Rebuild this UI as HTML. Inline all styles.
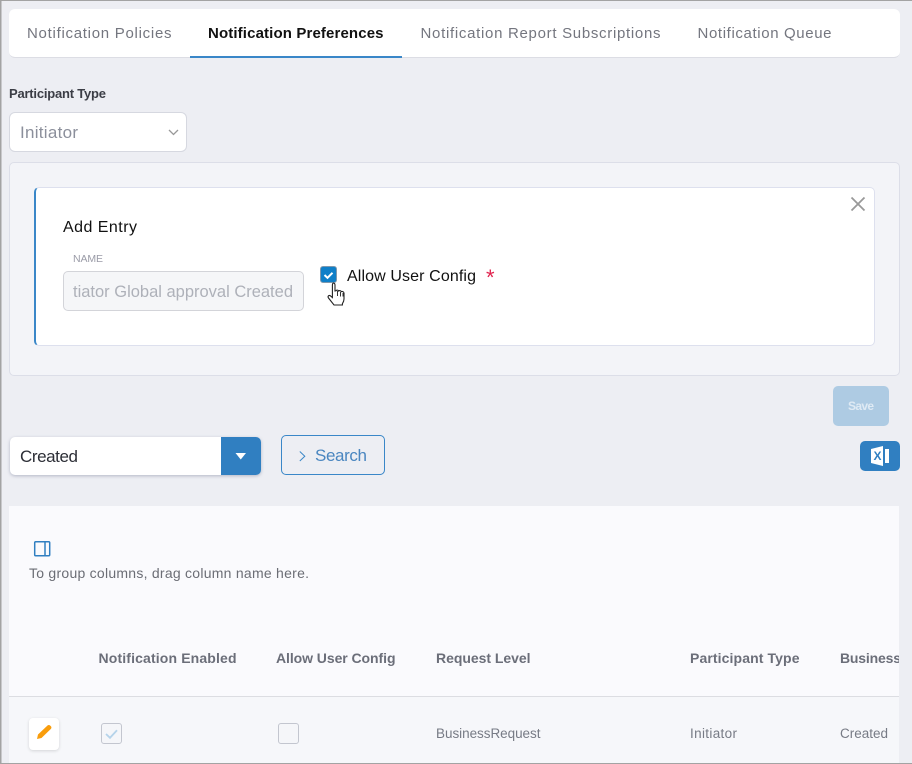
<!DOCTYPE html>
<html><head><meta charset="utf-8"><style>
html,body{margin:0;padding:0}
body{width:912px;height:764px;overflow:hidden;position:relative;background:#edeef3;font-family:"Liberation Sans",sans-serif}
.b{position:absolute;box-sizing:border-box}
svg{position:absolute;left:0;top:0}
text{font-family:"Liberation Sans",sans-serif}
</style></head><body>
<div class="b" style="left:9px;top:9px;width:891px;height:49px;background:#fff;border-radius:6px;border-bottom:1px solid #dcdde4"></div>
<div class="b" style="left:190px;top:56px;width:212px;height:2px;background:#3a87c8"></div>
<div class="b" style="left:9px;top:112px;width:178px;height:40px;background:#fff;border:1px solid #d6d8e0;border-radius:6px"></div>
<div class="b" style="left:9px;top:162px;width:891px;height:214px;background:#f3f4f8;border:1px solid #dcdee8;border-radius:5px"></div>
<div class="b" style="left:34px;top:187px;width:841px;height:159px;background:#fff;border:1px solid #dde0ee;border-left:2px solid #3a87c8;border-radius:5px"></div>
<div class="b" style="left:63px;top:271px;width:241px;height:40px;background:#f5f6f8;border:1px solid #d3d4d9;border-radius:5px"></div>
<div class="b" style="left:320px;top:266px;width:17px;height:17px;background:#0f7fc8;border:1px solid #7f98ad;border-radius:3px"></div>
<div class="b" style="left:833px;top:386px;width:56px;height:40px;background:#aecbe3;border-radius:5px"></div>
<div class="b" style="left:10px;top:437px;width:251px;height:38px;background:#fff;border-radius:5px;box-shadow:0 1px 3px rgba(90,100,130,.4);overflow:hidden"><div class="b" style="left:211px;top:0;width:40px;height:38px;background:#307fc1"></div></div>
<div class="b" style="left:281px;top:435px;width:104px;height:40px;border:1px solid #3a87c8;border-radius:5px"></div>
<div class="b" style="left:860px;top:441px;width:40px;height:30px;background:#307fc1;border-radius:5px"></div>
<div class="b" style="left:9px;top:506px;width:890px;height:258px;background:#fafafd"></div>
<div class="b" style="left:9px;top:696px;width:890px;height:68px;background:#f6f7fa;border-top:1px solid #dcdde2"></div>
<div class="b" style="left:29px;top:718px;width:30px;height:32px;background:#fff;border-radius:4px;box-shadow:0 1px 3px rgba(0,0,0,.14)"></div>
<div class="b" style="left:101px;top:723px;width:21px;height:21px;border:1px solid #c3c6cf;border-radius:3px;background:#f5f6f9"></div>
<div class="b" style="left:278px;top:723px;width:21px;height:21px;border:1px solid #c3c6cf;border-radius:3px;background:#f5f6f9"></div>
<svg width="912" height="764" viewBox="0 0 912 764">
<g font-size="15" fill="#74767f">
<text x="27" y="38" textLength="144.500" lengthAdjust="spacing">Notification Policies</text>
<text x="208" y="38" textLength="175.500" lengthAdjust="spacing" fill="#111" font-weight="700">Notification Preferences</text>
<text x="420.500" y="38" textLength="240" lengthAdjust="spacing">Notification Report Subscriptions</text>
<text x="697.500" y="38" textLength="134" lengthAdjust="spacing">Notification Queue</text>
</g>
<text x="9" y="98" font-size="13" font-weight="700" fill="#3b3d45" textLength="97" lengthAdjust="spacing">Participant Type</text>
<text x="20" y="138" font-size="17" fill="#8b8f9b" textLength="58" lengthAdjust="spacing">Initiator</text>
<path d="M169 130l4.500 4.500 4.500-4.500" fill="none" stroke="#999" stroke-width="1.300"/>
<text x="63" y="232" font-size="16" fill="#111" textLength="74" lengthAdjust="spacing">Add Entry</text>
<text x="73" y="262" font-size="10.500" fill="#9a9ba7" textLength="30" lengthAdjust="spacing">NAME</text>
<text x="73" y="297" font-size="16.500" fill="#aeb1b9" textLength="220" lengthAdjust="spacing">tiator Global approval Created</text>
<path d="M324.500 275l3 2.800 5-5" fill="none" stroke="#fff" stroke-width="2"/>
<text x="347" y="281" font-size="16" fill="#111" textLength="129" lengthAdjust="spacing">Allow User Config</text>
<text x="486" y="285" font-size="22" fill="#e0234e">*</text>
<path d="M333 283c1.300 0 2 .8 2 2v6l1-.2c.6-1 2.300-.9 2.700.2.800-.7 2.200-.4 2.600.6.900-.4 2.400 0 2.700 1.400v6c0 2-.6 3.200-1.600 4.700v1.300h-8.400l-5.500-7c-1.200-1.600.4-3.300 1.900-2.200l2 1.700v-12.500c0-1.200.7-2 1.600-2z" fill="#fff" stroke="#222" stroke-width="1.100"/>
<path d="M337.500 291v5M340.500 292v4.500M343 293v3.500" stroke="#222" stroke-width=".9" fill="none"/>
<path d="M851.500 197.500l13 13M864.500 197.500l-13 13" stroke="#999" stroke-width="1.800" fill="none"/>
<text x="848" y="410" font-size="12" font-weight="700" fill="#dfeaf4" textLength="26" lengthAdjust="spacing">Save</text>
<text x="20" y="462" font-size="17" fill="#2c2e36" textLength="58" lengthAdjust="spacing">Created</text>
<path d="M235.500 453h10.500l-5.250 6.500z" fill="#fff"/>
<path d="M299.800 451.500l5 4.700-5 4.800" fill="none" stroke="#3a87c8" stroke-width="1"/>
<text x="315" y="461" font-size="17" fill="#4a86c0" textLength="52" lengthAdjust="spacing">Search</text>
<path d="M871 449l12-3v20l-12-3z" fill="#fff"/>
<path d="M885 449h4v14h-4z" fill="#fff"/>
<text x="873.500" y="460" font-size="12" font-weight="700" fill="#307fc1">X</text>
<rect x="34.700" y="541.700" width="15" height="14" rx="1" fill="none" stroke="#307fc1" stroke-width="1.500"/>
<path d="M45 542v14" stroke="#307fc1" stroke-width="1.500"/>
<text x="29" y="578" font-size="14" fill="#6b6d75" textLength="280" lengthAdjust="spacing">To group columns, drag column name here.</text>
<g font-size="14" font-weight="700" fill="#6b6e79">
<text x="98.500" y="663" textLength="138" lengthAdjust="spacing">Notification Enabled</text>
<text x="276" y="663" textLength="119.500" lengthAdjust="spacing">Allow User Config</text>
<text x="436" y="663" textLength="94.500" lengthAdjust="spacing">Request Level</text>
<text x="690" y="663" textLength="109.500" lengthAdjust="spacing">Participant Type</text>
<text x="840" y="663" textLength="61" lengthAdjust="spacing">Business</text>
</g>
<rect x="899" y="640" width="13" height="50" fill="#edeef3"/>
<g font-size="13.500" fill="#777b85">
<text x="436" y="738" textLength="104.500" lengthAdjust="spacing">BusinessRequest</text>
<text x="690" y="738" textLength="47" lengthAdjust="spacing">Initiator</text>
<text x="840" y="738" textLength="48" lengthAdjust="spacing">Created</text>
</g>
<path d="M37 739l1-4.500 9.500-9c.8-.7 1.800-.7 2.600 0l.8.8c.7.8.7 1.800 0 2.600l-9.400 9.100z" fill="#f99d0c"/>
<path d="M106 734l4 3.800 7-7.500" fill="none" stroke="#b5d3ea" stroke-width="1.800"/>
<rect x="0" y="0" width="912" height="1" fill="#a3a3a3"/>
<rect x="0" y="0" width="1.500" height="764" fill="#a3a3a3"/>
<rect x="0" y="763" width="912" height="1" fill="#a3a3a3"/>
</svg>
</body></html>
